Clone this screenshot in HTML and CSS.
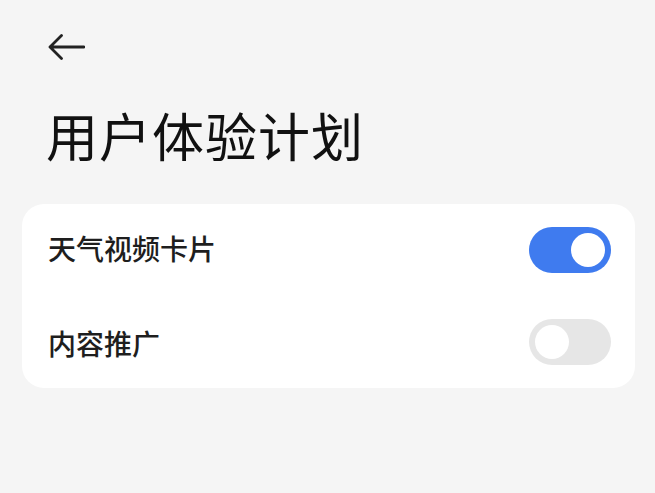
FILE: index.html
```html
<!DOCTYPE html>
<html lang="zh-CN">
<head>
    <meta charset="UTF-8">
    <title>用户体验计划</title>
    <link rel="stylesheet" href="styles.css">
</head>
<body>
    <div class="page">
        <!-- 返回 -->
        <div class="top-bar">
            <svg class="back-icon" width="38" height="26" viewBox="0 0 38 26" fill="none">
                <path d="M37 13H3 M14.5 1.5 L3 13 L14.5 24.5" stroke="#222" stroke-width="2.8" stroke-linecap="round" stroke-linejoin="round"/>
            </svg>
        </div>

        <h1 class="page-title">用户体验计划</h1>

        <!-- 设置项 -->
        <div class="settings-card">
            <div class="setting-row">
                <span class="setting-label">天气视频卡片</span>
                <div class="switch on"><div class="knob"></div></div>
            </div>
            <div class="setting-row">
                <span class="setting-label">内容推广</span>
                <div class="switch"><div class="knob"></div></div>
            </div>
        </div>
    </div>
</body>
</html>
```

FILE: styles.css
```css
:root {
    --accent: #3f7bef;
    --bg: #f5f5f5;
}

body {
    margin: 0;
    background: var(--bg);
    font-family: "Noto Sans CJK SC", "Noto Sans", sans-serif;
    color: #1a1a1a;
}

.page {
    width: 655px;
    height: 493px;
    overflow: hidden;
}

/* 顶部返回 */
.top-bar {
    padding: 34px 0 0 47px;
    height: 26px;
}

.back-icon {
    display: block;
}

/* 标题 */
.page-title {
    margin: 49px 0 0 46px;
    font-size: 52px;
    line-height: 52px;
    font-weight: 400;
    letter-spacing: 1px;
    color: #111;
}

/* 卡片 */
.settings-card {
    margin: 43px 20px 0 22px;
    background: #fff;
    border-radius: 22px;
    padding: 0 24px 0 26px;
}

.setting-row {
    height: 92px;
    display: flex;
    align-items: center;
    justify-content: space-between;
}

.setting-label {
    font-size: 28px;
    line-height: 28px;
    font-weight: 500;
    margin-top: -4px;
    color: #1e1e1e;
}

.setting-row + .setting-row .setting-label {
    margin-top: 2px;
}

/* 开关 */
.switch {
    width: 82px;
    height: 46px;
    border-radius: 23px;
    background: #e6e6e6;
    display: flex;
    align-items: center;
    padding: 0 6px;
    box-sizing: border-box;
}

.switch .knob {
    width: 34px;
    height: 34px;
    border-radius: 50%;
    background: #fff;
}

.switch.on {
    background: var(--accent);
    justify-content: flex-end;
}
```
